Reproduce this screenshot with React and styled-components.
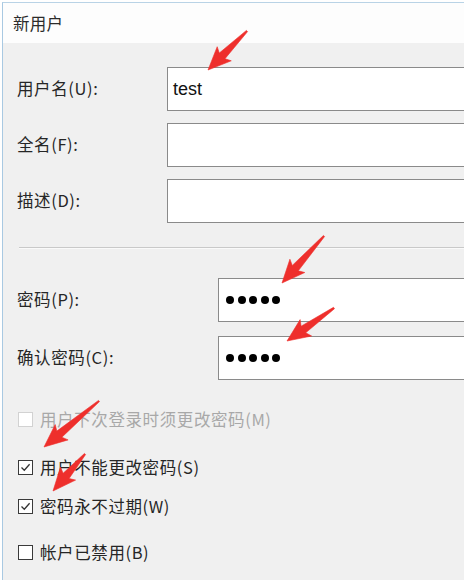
import React from "react";
import styled, { createGlobalStyle } from "styled-components";

const Global = createGlobalStyle`
  html, body { margin: 0; padding: 0; background: #ffffff; }
  body { font-family: "Noto Sans CJK SC", "Noto Sans", sans-serif; }
`;

const Window = styled.div`
  position: relative;
  width: 462px;
  height: 578px;
  margin: 2px 0 0 2px;
  border-left: 1px solid #a9c9e2;
  border-top: 1px solid #b9d3e6;
  background: #f0f0f0;
  overflow: hidden;
  display: flex;
  flex-direction: column;
`;

const TitleBar = styled.div`
  height: 40px;
  flex: none;
  background: #fdfdfd;
  display: flex;
  align-items: center;
  padding-left: 10px;
  font-size: 16.5px;
  letter-spacing: 0.3px;
  color: #2b2b2b;
`;

const Body = styled.div`
  padding: 24px 0 0 14px;
  display: flex;
  flex-direction: column;
`;

const FieldGroup = styled.div`
  display: grid;
  grid-template-columns: ${(p) => p.$labelWidth}px 1fr;
  row-gap: ${(p) => p.$gap}px;
  margin-right: -12px;
  margin-top: ${(p) => p.$top || 0}px;
`;

const Label = styled.div`
  display: flex;
  align-items: center;
  font-size: 16.5px;
  letter-spacing: 0.6px;
  color: #262626;
  margin-top: -2px;
`;

const TextBox = styled.div`
  height: 42px;
  background: #ffffff;
  border: 1px solid #8a8a8a;
  display: flex;
  align-items: center;
  padding-left: 5px;
  font-family: "Liberation Sans", "Noto Sans", sans-serif;
  font-size: 18px;
  color: #111;
`;

const Dots = styled.div`
  display: flex;
  gap: 3.6px;
  padding-left: 2px;
`;

const Dot = styled.span`
  width: 8px;
  height: 8px;
  border-radius: 50%;
  background: #000;
`;

const Separator = styled.div`
  height: 1px;
  background: #c9c9c9;
  border-bottom: 1px solid #fafafa;
  margin: 24px 0 0 2px;
`;

const CheckList = styled.div`
  display: flex;
  flex-direction: column;
  margin-top: 17px;
`;

const CheckRow = styled.div`
  height: 44px;
  display: flex;
  align-items: center;
  gap: 7px;
  padding-left: 1px;
  margin-top: ${(p) => p.$shift || 0}px;
  font-size: 16.5px;
  letter-spacing: 0.6px;
  color: ${(p) => (p.$disabled ? "#a8a8a8" : "#262626")};
`;

const Box = styled.span`
  width: 13px;
  height: 13px;
  flex: none;
  border: 1px solid ${(p) => (p.$disabled ? "#d2d2d2" : "#3a3a3a")};
  background: #fff;
  display: flex;
  align-items: center;
  justify-content: center;
`;

const Overlay = styled.svg`
  position: absolute;
  left: -3px;
  top: -3px;
  width: 464px;
  height: 580px;
  pointer-events: none;
`;

function Check({ checked, disabled, children, shift }) {
  return (
    <CheckRow $disabled={disabled} $shift={shift}>
      <Box $disabled={disabled}>
        {checked && (
          <svg width="11" height="11" viewBox="0 0 11 11">
            <path d="M1.5 5.5 L4.3 8.3 L9.6 2.2" fill="none" stroke="#333" strokeWidth="1.3" />
          </svg>
        )}
      </Box>
      <span>{children}</span>
    </CheckRow>
  );
}

function arrowPoints(tx, ty, hx, hy, headLen = 20, headHalf = 10, neckHalf = 4, tailHalf = 0.8) {
  const dx = hx - tx;
  const dy = hy - ty;
  const len = Math.hypot(dx, dy);
  const ux = dx / len;
  const uy = dy / len;
  const nx = -uy;
  const ny = ux;
  const cx = hx - ux * headLen;
  const cy = hy - uy * headLen;
  const pts = [
    [tx + nx * tailHalf, ty + ny * tailHalf],
    [cx + nx * neckHalf, cy + ny * neckHalf],
    [cx + nx * headHalf - ux * 3, cy + ny * headHalf - uy * 3],
    [hx, hy],
    [cx - nx * headHalf - ux * 3, cy - ny * headHalf - uy * 3],
    [cx - nx * neckHalf, cy - ny * neckHalf],
    [tx - nx * tailHalf, ty - ny * tailHalf],
  ];
  return pts.map((p) => p.map((v) => v.toFixed(1)).join(",")).join(" ");
}

const arrows = [
  [247, 31, 208, 70],
  [324, 236, 282, 283],
  [334, 308, 287, 341],
  [99, 401, 44, 447],
  [85, 454, 53, 491],
];

export default function App() {
  return (
    <>
      <Global />
      <Window>
        <TitleBar>新用户</TitleBar>
        <Body>
          <FieldGroup $labelWidth={150} $gap={12}>
            <Label>用户名(U):</Label>
            <TextBox>test</TextBox>
            <Label>全名(F):</Label>
            <TextBox />
            <Label>描述(D):</Label>
            <TextBox />
          </FieldGroup>
          <Separator />
          <FieldGroup $labelWidth={201} $gap={14} $top={29}>
            <Label>密码(P):</Label>
            <TextBox>
              <Dots>
                {[0, 1, 2, 3, 4].map((i) => (
                  <Dot key={i} />
                ))}
              </Dots>
            </TextBox>
            <Label>确认密码(C):</Label>
            <TextBox>
              <Dots>
                {[0, 1, 2, 3, 4].map((i) => (
                  <Dot key={i} />
                ))}
              </Dots>
            </TextBox>
          </FieldGroup>
          <CheckList>
            <Check disabled>用户下次登录时须更改密码(M)</Check>
            <Check checked shift={4}>用户不能更改密码(S)</Check>
            <Check checked shift={-5}>密码永不过期(W)</Check>
            <Check shift={2}>帐户已禁用(B)</Check>
          </CheckList>
        </Body>
        <Overlay viewBox="0 0 464 580">
          {arrows.map((a, i) => (
            <polygon key={i} points={arrowPoints(...a)} fill="#ee2f2c" stroke="#ee2f2c" strokeWidth="0.6" strokeLinejoin="round" />
          ))}
        </Overlay>
      </Window>
    </>
  );
}
